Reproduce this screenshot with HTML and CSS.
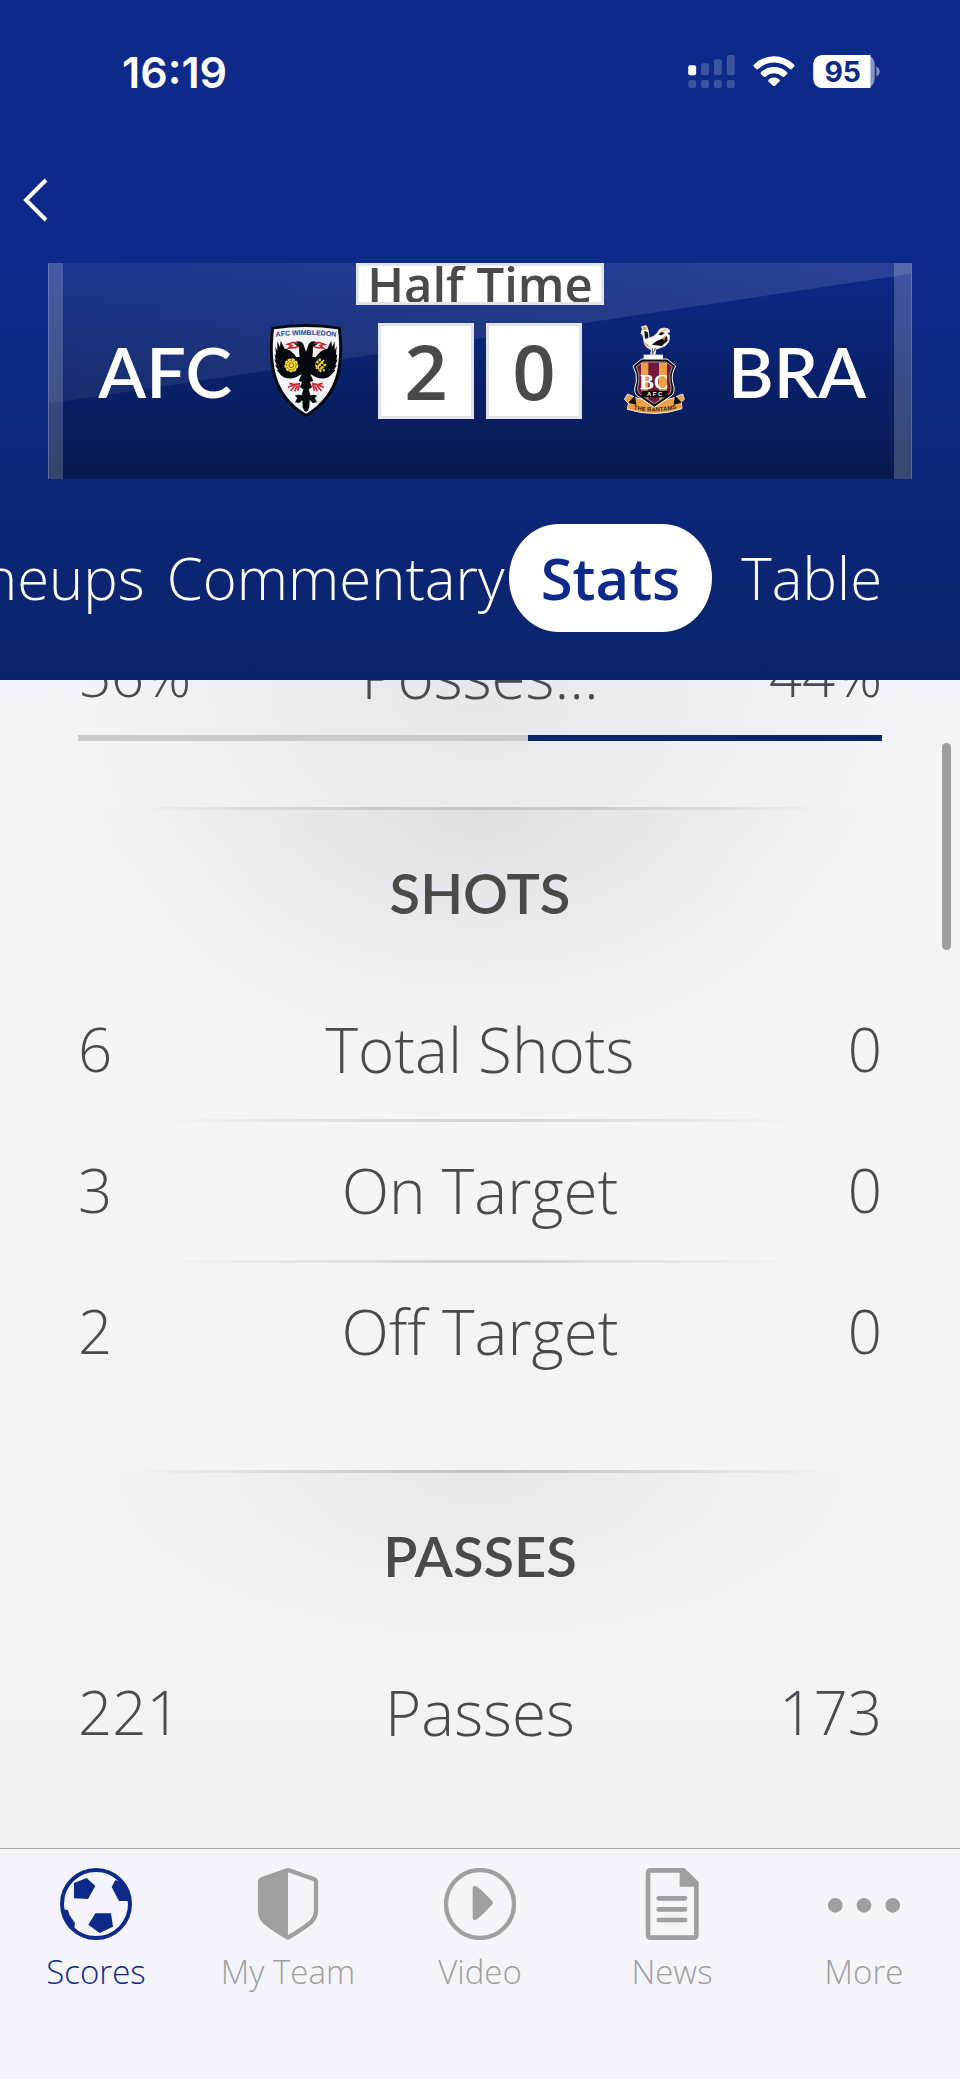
FILE: index.html
```
<!DOCTYPE html>
<html lang="en">
<head>
    <meta charset="UTF-8">
    <meta name="viewport" content="width=device-width, initial-scale=1.0">
    <title>AFC 2 - 0 BRA | Stats</title>
    <link rel="stylesheet" href="styles.css">
</head>
<body>

    <header class="header">
        <div class="status-bar">
            <span class="time">16:19</span>
            <div class="status-icons">
                <svg class="signal" viewBox="57 44 141 100">
                    <g fill="#3c539f">
                        <rect x="96" y="69" width="24" height="36" rx="6"/>
                        <rect x="135" y="57" width="24" height="48" rx="6"/>
                        <rect x="174" y="44" width="24" height="61" rx="6"/>
                        <rect x="57" y="120" width="24" height="24" rx="6"/>
                        <rect x="96" y="120" width="24" height="24" rx="6"/>
                        <rect x="135" y="120" width="24" height="24" rx="6"/>
                        <rect x="174" y="120" width="24" height="24" rx="6"/>
                    </g>
                    <rect x="57" y="75" width="24" height="30" rx="6" fill="#fff"/>
                </svg>
                <svg class="wifi" viewBox="252 44 126 100" fill="#fff">
                    <path d="M253 74Q280 48 315 48T377 74Q378 77 375 80L368 87Q365 89 362 86Q341 67 315 67T268 86Q265 89 262 87L255 80Q252 77 253 74Z"/>
                    <path d="M275 96Q292 80 315 80T355 96Q357 99 354 102L346 110Q343 112 340 109Q328 99 315 99T290 109Q287 112 284 110L276 102Q273 99 275 96Z"/>
                    <path d="M298 119Q305 112 315 112T332 119Q334 122 331 125L318 137Q315 139 312 137L299 125Q296 122 298 119Z"/>
                </svg>
                <svg class="battery" viewBox="429 44 201 100">
                    <path d="M461 44H583Q615 44 615 76V112Q615 144 583 144H461Q429 144 429 112V76Q429 44 461 44Z" fill="#8694c4"/>
                    <path d="M461 44H602V144H461Q429 144 429 112V76Q429 44 461 44Z" fill="#fff"/>
                    <path d="M620 79Q630 84 630 94T620 109Z" fill="#8694c4"/>
                    <text class="battery-level" x="518" y="125">95</text>
                </svg>
            </div>
        </div>

        <button class="back" type="button" aria-label="Back">
            <svg viewBox="0 0 26 44" fill="none" stroke="#fff" stroke-width="4"><path d="M24 2L4 22L24 42"/></svg>
        </button>

        <section class="scoreboard">
            <p class="match-status">Half Time</p>
            <div class="score-row">
                <div class="team home">
                    <span class="team-name">AFC</span>
                    <svg class="crest" viewBox="24 39 288 288">
                        <path d="M64 51Q168 33 272 51C277 90 280 140 269 191Q248 275 168 321Q88 275 67 191C56 140 59 90 64 51Z" fill="#04090d"/>
                        <path d="M72 58Q168 44 264 58C269 100 270 145 260 188Q240 268 168 311Q96 268 76 188C66 145 67 100 72 58Z" fill="#f4f4f6"/>
                        <path id="arc" d="M78 80Q168 70 258 80" fill="none"/>
                        <text class="crest-blue"><textPath href="#arc" startOffset="50%">AFC WIMBLEDON</textPath></text>
                        <g id="eagle-half">
                            <path d="M169 128L162 108Q158 95 146 94Q137 94 132 101L141 107Q150 112 147 122L149 140L139 142Q124 118 104 116L92 92L90 112L82 94L82 122L76 108L78 136L74 132L77 150L73 148L80 166L75 164L84 180L80 180L92 194Q110 212 138 202L155 192L146 213L156 216L150 232L160 238L155 256L145 254L134 257L142 264L135 277L148 279L157 270L158 292L163 302L169 306Z" fill="#04090d"/>
                            <path d="M144 100L130 97L113 103L126 106L116 114L136 113L146 108M150 221L132 224L118 220M134 224L114 232M136 226L122 243M142 226L134 244M148 224L143 242" fill="none" stroke="#cf2435" stroke-width="5"/>
                        </g>
                        <use href="#eagle-half" transform="matrix(-1 0 0 1 336 0)"/>
                        <circle cx="124" cy="166" r="18" fill="#f3dc3e" stroke="#f3dc3e" stroke-width="6" stroke-dasharray="9 3"/>
                        <circle cx="124" cy="166" r="14" fill="none" stroke="#3c360c" stroke-width="2" stroke-dasharray="7 3"/>
                        <circle cx="124" cy="166" r="7" fill="none" stroke="#3c360c" stroke-width="2"/>
                        <path d="M206 148L228 170M200 154L224 184M196 164L214 186M222 150L198 176M228 162L206 184M212 146L196 160" stroke="#f3dc3e" stroke-width="5" stroke-dasharray="8 2"/>
                    </svg>
                </div>
                <div class="score">
                    <span>2</span>
                    <span>0</span>
                </div>
                <div class="team away">
                    <svg class="crest" viewBox="15 39 288 288">
                        <!-- rooster -->
                        <path d="M124 58L122 50L136 47L142 62L144 84Q158 82 168 70L176 58Q188 50 204 58L206 66L198 70L206 76L204 92Q200 106 182 112L164 118L162 134H148L152 120Q132 112 130 100L126 78L120 70Z" fill="#fff" stroke="#d8d9e0" stroke-width="3"/>
                        <path d="M130 62L140 66L142 84L132 86ZM172 74L180 66L192 68L182 76ZM188 84L198 78L200 92L182 108L152 104L166 94Z" fill="#111"/>
                        <path d="M124 52L134 50L138 60L126 60ZM172 72Q186 54 202 60L186 64ZM130 94L138 102L150 112L136 108ZM184 84L194 76L190 92Z" fill="#eba047"/>
                        <path d="M154 114L156 136M164 114L158 126L148 134" fill="none" stroke="#111" stroke-width="2"/>
                        <path d="M128 134H186V147H128Z" fill="#fff"/>
                        <!-- ribbon -->
                        <path d="M80 252L108 264Q160 282 216 264L245 252L250 268L241 276L243 296Q162 324 79 298L82 280L70 268Z" fill="#eba047" stroke="#e8e8ee" stroke-width="3"/>
                        <path d="M102 256L82 278L106 284ZM222 256L242 278L218 284Z" fill="#111"/>
                        <!-- shield -->
                        <path d="M122 147H198L224 168Q210 192 215 216Q228 252 204 262L160 292L116 262Q92 252 106 216Q110 192 96 168Z" fill="#111" stroke="#fff" stroke-width="3"/>
                        <path d="M125 156H195L214 170Q202 192 207 218Q216 246 200 255L160 281L120 255Q104 246 113 218Q118 192 106 170Z" fill="#70193c" stroke="#e4e4e8" stroke-width="2"/>
                        <path d="M120 158H142V268L120 254ZM174 158H198V256L174 270Z" fill="#eba047"/>
                        <text class="bantam-monogram" x="160" y="236">BC</text>
                        <path d="M121 242H201V262H121Z" fill="#050505"/>
                        <text class="bantam-afc" x="161" y="258">A F C</text>
                        <path id="ribbon" d="M90 296Q162 314 234 294" fill="none"/>
                        <text class="bantam-motto"><textPath href="#ribbon" startOffset="50%">THE BANTAMS</textPath></text>
                    </svg>
                    <span class="team-name">BRA</span>
                </div>
            </div>
        </section>

        <nav class="match-nav">
            <a href="#">Lineups</a>
            <a href="#">Commentary</a>
            <a href="#" class="active">Stats</a>
            <a href="#">Table</a>
        </nav>
    </header>

    <main class="content">
        <div class="possession">
            <div class="possession-row">
                <span>56%</span>
                <span class="possession-label">Posses...</span>
                <span>44%</span>
            </div>
            <div class="possession-bar"><div style="width: 44%"></div></div>
        </div>

        <section class="stats shots">
            <h2>SHOTS</h2>
            <table>
                <tr><td>6</td><th scope="row">Total Shots</th><td>0</td></tr>
                <tr><td>3</td><th scope="row">On Target</th><td>0</td></tr>
                <tr><td>2</td><th scope="row">Off Target</th><td>0</td></tr>
            </table>
        </section>

        <section class="stats passes">
            <h2>PASSES</h2>
            <table>
                <tr><td>221</td><th scope="row">Passes</th><td>173</td></tr>
            </table>
        </section>

        <div class="scroll-thumb"></div>
    </main>

    <nav class="tab-bar">
        <a href="#" class="active">
            <svg viewBox="180 114 216 216">
                <circle cx="288" cy="222" r="102" fill="none" stroke="currentColor" stroke-width="12"/>
                <path d="M222 159L260 144L286 168L264 207L222 205ZM346 150L335 171L357 213H384L390 190L366 157ZM286 250H333L339 290L299 309L265 284ZM188 238L204 240L208 254L225 280L222 300L206 294Z" fill="currentColor"/>
            </svg>
            Scores
        </a>
        <a href="#">
            <svg viewBox="756 114 216 216">
                <path d="M864 120L941 147Q948 150 948 157V242Q948 266 925 283Q900 302 864 323Q828 302 803 283Q780 266 780 242V157Q780 150 787 147Z" fill="none" stroke="currentColor" stroke-width="13" stroke-linejoin="round"/>
                <path d="M864 120L780 150V242Q780 266 803 283Q828 302 864 323Z" fill="currentColor"/>
            </svg>
            My Team
        </a>
        <a href="#">
            <svg viewBox="1329 114 216 216">
                <circle cx="1437" cy="222" r="102" fill="none" stroke="currentColor" stroke-width="13"/>
                <path d="M1415 174Q1415 167 1423 168Q1434 171 1474 214Q1478 218 1474 223Q1434 267 1423 270Q1415 271 1415 264Z" fill="currentColor"/>
            </svg>
            Video
        </a>
        <a href="#">
            <svg viewBox="472 114 216 216">
                <path d="M517 121H614L653 158V314Q653 323 644 323H517Q508 323 508 314V130Q508 121 517 121Z" fill="none" stroke="currentColor" stroke-width="14"/>
                <path d="M603 121H616L653 158V170H603Z" fill="currentColor"/>
                <path d="M540 205H619M540 238H619M540 270H619" stroke="currentColor" stroke-width="14" stroke-linecap="round"/>
            </svg>
            News
        </a>
        <a href="#">
            <svg viewBox="1044 114 216 216" fill="currentColor">
                <circle cx="1066" cy="226" r="22"/>
                <circle cx="1152" cy="226" r="22"/>
                <circle cx="1238" cy="226" r="22"/>
            </svg>
            More
        </a>
    </nav>

</body>
</html>
```
FILE: styles.css
```
* {
    box-sizing: border-box;
}

body {
    margin: 0;
    min-height: 100vh;
    display: flex;
    flex-direction: column;
    font-family: "Open Sans", "Noto Sans", sans-serif;
    font-weight: 350;
    color: #4a4a4a;
    background: #f4f4fa;
}

a {
    color: inherit;
    text-decoration: none;
}

/* header */
.header {
    padding-bottom: 48px;
    color: #fff;
    background: linear-gradient(#0d298a 0, #0d298a 260px, #0b246b 100%);
    overflow: hidden;
}

.status-bar {
    display: flex;
    justify-content: space-between;
    align-items: center;
    height: 143px;
    padding: 0 80px 0 122px;
}

.time {
    font-family: Inter, sans-serif;
    font-size: 43px;
    font-weight: 600;
}

.status-icons {
    display: flex;
    align-items: center;
    gap: 18px;
}

.status-icons svg {
    display: block;
    height: 33px;
}

.signal {
    width: 47px;
}

.wifi {
    width: 42px;
}

.battery {
    width: 67px;
}

.battery-level {
    font-family: Inter, sans-serif;
    font-size: 86px;
    font-weight: 700;
    text-anchor: middle;
    fill: #0d298a;
}

.back {
    display: block;
    height: 113px;
    padding: 0 24px 0 22px;
    border: none;
    background: none;
    cursor: pointer;
}

.back svg {
    display: block;
    width: 26px;
    height: 44px;
}

.scoreboard {
    position: relative;
    display: flex;
    flex-direction: column;
    align-items: center;
    margin: 7px 5% 0;
    padding-bottom: 60px;
    background:
        linear-gradient(90deg, rgba(255, 255, 255, 0.18) 14px, transparent 14px, transparent calc(100% - 17px), rgba(255, 255, 255, 0.2) calc(100% - 17px)),
        linear-gradient(#0d298a, #071a4e);
    border: solid rgba(255, 255, 255, 0.2);
    border-width: 0 1px;
}

/* slanted shine over the top of the board */
.scoreboard::before {
    content: "";
    position: absolute;
    inset: 0;
    background: linear-gradient(90deg, rgba(255, 255, 255, 0.06), rgba(255, 255, 255, 0.12));
    clip-path: polygon(0 0, 100% 0, 100% 5%, 0 65%);
}

.match-status {
    position: relative;
    height: 42px;
    margin: 0 0 18px;
    padding: 0 8px;
    border: 3px solid #e2e3e6;
    background: #fff;
    color: #4a4a4a;
    font-size: 49px;
    font-weight: 600;
    line-height: 36px;
    overflow: hidden;
}

.score-row {
    position: relative;
    display: grid;
    grid-template-columns: 1fr auto 1fr;
    gap: 24px;
    width: 100%;
}

.team {
    display: flex;
    align-items: center;
    gap: 26px;
}

.home {
    justify-content: flex-end;
}

.team-name {
    font-family: Lato, sans-serif;
    font-size: 70px;
    font-weight: 600;
    line-height: 96px;
}

.crest {
    width: 96px;
    height: 96px;
}

.crest text {
    text-anchor: middle;
    font-family: "Liberation Sans", sans-serif;
    font-weight: 700;
}

.crest .crest-blue {
    font-size: 21px;
    fill: #1d3f8f;
}

.crest .bantam-monogram {
    font-family: "Liberation Serif", serif;
    font-size: 62px;
    fill: #fff;
}

.crest .bantam-afc {
    font-size: 18px;
    fill: #fff;
}

.crest .bantam-motto {
    font-size: 18px;
    fill: #3a2410;
}

.score {
    display: flex;
    gap: 12px;
}

.score span {
    width: 96px;
    height: 96px;
    border: 3px solid #e2e3e6;
    background: #fff;
    color: #4a4a4a;
    font-size: 76px;
    font-weight: 600;
    line-height: 90px;
    text-align: center;
}

.match-nav {
    display: flex;
    justify-content: flex-end;
    align-items: center;
    margin-top: 45px;
    padding-right: 78px;
    font-size: 58px;
    line-height: 108px;
}

.match-nav a {
    padding-left: 22px;
}

.match-nav .active {
    margin: 0 7px 0 4px;
    padding: 0 32px;
    border-radius: 50px / 54px;
    background: #fff;
    color: #0d298a;
    font-weight: 600;
}

/* stats */
.content {
    position: relative;
    flex: 1;
    overflow: hidden;
    font-size: 60px;
    background: radial-gradient(ellipse 440px 340px at 50% 0, rgba(0, 0, 0, 0.06), transparent), linear-gradient(#f5f4fa, #f3f3f7);
}

.possession {
    display: flow-root;
    height: 127px;
    padding: 0 78px;
}

.possession-row {
    display: grid;
    grid-template-columns: 1fr 2fr 1fr;
    height: 90px;
    margin-top: -35px;
    font-size: 58px;
    line-height: 60px;
}

.possession-label {
    font-size: 62px;
    text-align: center;
}

.possession-row span:last-child {
    text-align: right;
}

.possession-bar {
    display: flex;
    justify-content: flex-end;
    height: 6px;
    background: #cbcbce;
}

.possession-bar div {
    background: #0b246b;
}

.stats {
    padding: 0 78px;
    background:
        linear-gradient(90deg, transparent 14%, #c2c2c5 50%, transparent 86%) 0 0 / 100% 3px no-repeat,
        radial-gradient(ellipse 380px 170px at 50% 0, rgba(0, 0, 0, 0.05), transparent);
}

.shots {
    height: 663px;
    background:
        linear-gradient(90deg, transparent 14%, #c2c2c5 50%, transparent 86%) 0 0 / 100% 3px no-repeat,
        radial-gradient(ellipse 400px 270px at 50% 0, rgba(0, 0, 0, 0.05), transparent);
}

.stats h2 {
    margin: 0;
    padding-top: 46px;
    font-family: Lato, sans-serif;
    font-size: 56px;
    font-weight: 600;
    line-height: 80px;
    text-align: center;
}

.stats table {
    width: 100%;
    margin-top: 45px;
    border-collapse: collapse;
    table-layout: fixed;
}

.stats tr + tr {
    background: linear-gradient(90deg, transparent 10%, #d2d2d4 50%, transparent 90%) 0 0 / 100% 3px no-repeat;
}

.stats td,
.stats th {
    height: 141px;
    padding: 0;
    font-weight: 350;
    line-height: 80px;
}

.stats th {
    width: 50%;
    font-size: 62px;
    text-align: center;
}

.stats td {
    text-align: left;
}

.stats td:last-child {
    text-align: right;
}

.scroll-thumb {
    position: absolute;
    top: 63px;
    right: 9px;
    width: 9px;
    height: 207px;
    border-radius: 5px;
    background: #9f9fa2;
}

/* bottom tabs */
.tab-bar {
    display: grid;
    grid-template-columns: repeat(5, 1fr);
    height: 231px;
    padding-top: 19px;
    border-top: 1px solid #a9a9ac;
    background: #f4f4fa;
    color: #9f9fa1;
    font-size: 33px;
}

.tab-bar a {
    display: flex;
    flex-direction: column;
    align-items: center;
    gap: 10px;
    line-height: 44px;
}

.tab-bar svg {
    width: 72px;
    height: 72px;
}

.tab-bar .active {
    color: #0d298a;
}
```
